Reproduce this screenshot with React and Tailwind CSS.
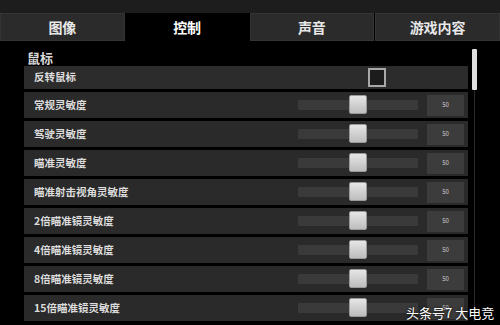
import React from 'react';

const tabs = [
  { label: '图像', active: false },
  { label: '控制', active: true },
  { label: '声音', active: false },
  { label: '游戏内容', active: false },
];

const sliders = [
  '常规灵敏度',
  '驾驶灵敏度',
  '瞄准灵敏度',
  '瞄准射击视角灵敏度',
  '2倍瞄准镜灵敏度',
  '4倍瞄准镜灵敏度',
  '8倍瞄准镜灵敏度',
  '15倍瞄准镜灵敏度',
];

const font = { fontFamily: '"Noto Sans CJK SC", "Noto Sans", sans-serif' };

function SliderRow({ label, value }) {
  return (
    <div className="flex items-center h-[26px] shrink-0 bg-[#2a2a2a]">
      <span className="pl-[10px] text-[10.5px] font-bold leading-none text-[#dcdcdc] flex-1">{label}</span>
      <div className="relative w-[120px] h-[10px] bg-[#3a3a3a] rounded-[1px]">
        <div className="absolute left-[51px] top-[-5px] w-[18px] h-[19px] rounded-[2px] bg-gradient-to-b from-[#e6e6e6] to-[#bdbdbd] border border-[#9a9a9a]" />
      </div>
      <div className="ml-[9px] mr-[4px] w-[37px] h-[21px] bg-[#3c3c3c] flex items-center justify-center text-[6px] leading-none text-[#cfcfcf]">
        {value}
      </div>
    </div>
  );
}

export default function App() {
  return (
    <div className="relative w-[500px] h-[325px] overflow-hidden bg-black" style={font}>
      <div className="h-[13px] bg-[#1d1d1d]" />
      <div className="flex h-[28px] gap-px bg-black">
        {tabs.map((t) => (
          <div
            key={t.label}
            className={`flex-1 flex items-center justify-center text-[14px] font-bold leading-none ${
              t.active ? 'bg-black text-white' : 'bg-[#2b2b2b] text-[#e8e8e8] border border-[#343434]'
            }`}
          >
            {t.label}
          </div>
        ))}
      </div>

      <div className="flex">
        <div className="w-[24px] shrink-0" />
        <div className="w-[444px] shrink-0 flex flex-col">
          <div className="h-[25px] pl-[3px] pt-[10px] text-[13px] font-bold leading-[13px] text-[#d8d8d8]">鼠标</div>
          <div className="flex flex-col gap-[3px]">
            <div className="flex items-center h-[23px] bg-[#2c2c2c]">
              <span className="pl-[10px] text-[10.5px] font-bold leading-none text-[#dcdcdc] flex-1">反转鼠标</span>
              <div className="mr-[82px] w-[18px] h-[19px] border-2 border-[#a8a8a8] bg-[#1c1c1c]" />
            </div>
            {sliders.map((s) => (
              <SliderRow key={s} label={s} value="50" />
            ))}
          </div>
        </div>
        <div className="w-[3px] shrink-0" />
        <div className="w-[6px] shrink-0 flex flex-col items-center pt-[8px]">
          <div className="w-[5px] h-[41px] bg-[#dedede] rounded-[1px]" />
          <div className="w-px flex-1 bg-[#2a2a2a]" />
        </div>
      </div>

      <div className="absolute left-[406px] top-[306px] whitespace-nowrap text-[13px] leading-none text-white [text-shadow:0_0_3px_rgba(0,0,0,0.9)]">
        头条号7 大电竞
      </div>
    </div>
  );
}
